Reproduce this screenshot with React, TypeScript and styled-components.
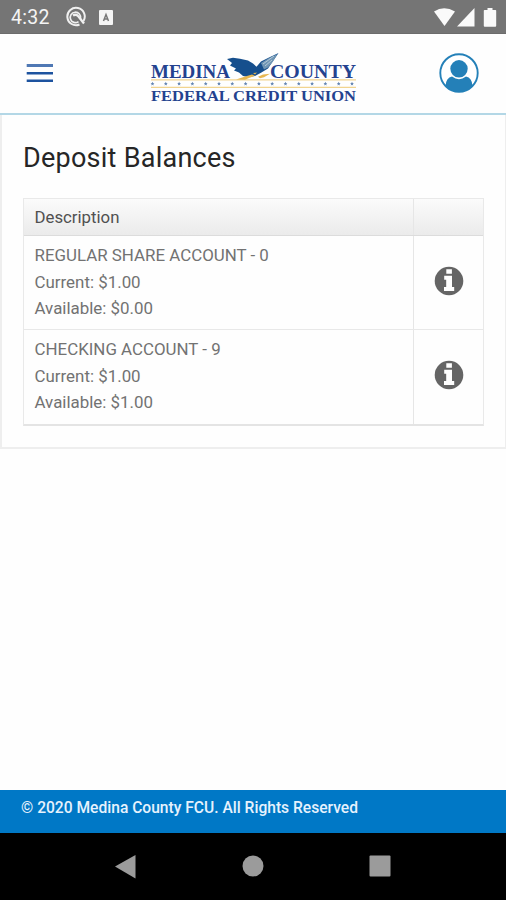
import React from "react";
import styled, { createGlobalStyle } from "styled-components";

const GlobalStyle = createGlobalStyle`
  * { box-sizing: border-box; }
  body { margin: 0; background: #fff; font-family: Roboto, sans-serif; }
  svg { display: block; flex: none; }
`;

const Screen = styled.div`
  width: 506px;
  height: 900px;
  display: flex;
  flex-direction: column;
  background: #fefefe;
`;

const StatusBar = styled.div`
  height: 34px;
  flex: none;
  display: flex;
  align-items: center;
  padding: 1px 9px 0 11px;
  background: #757575;
  border-bottom: 1px solid #6c6c6c;
  color: #f4f4f4;
`;

const Clock = styled.span`
  width: 54px;
  padding-top: 1px;
  font-size: 19.5px;
  letter-spacing: 0.3px;
  line-height: 33px;
`;

const StatusIcons = styled.div<{ $end?: boolean }>`
  display: flex;
  align-items: center;
  gap: ${(p) => (p.$end ? "0" : "12px")};
  margin-left: ${(p) => (p.$end ? "auto" : "0")};
`;

const Header = styled.header`
  height: 81px;
  flex: none;
  display: flex;
  align-items: flex-start;
  padding: 0 27px 0 26px;
  border-bottom: 2px solid #b3d7e6;
`;

const MenuButton = styled.button`
  width: 28px;
  height: 78px;
  padding: 0;
  border: 0;
  background: none;
  display: flex;
  align-items: center;
`;

const LogoBox = styled.div`
  margin: 14px 0 0 94px;
`;

const ProfileButton = styled(MenuButton)`
  width: 40px;
  margin: 0 0 0 auto;
`;

const Panel = styled.main`
  height: 334px;
  flex: none;
  padding: 26px 21px 0 21px;
  border: 1px solid #eeeeee;
  border-width: 0 1px 2px 2px;
`;

const Title = styled.h1`
  margin: 0;
  font-size: 27px;
  font-weight: 400;
  line-height: 34px;
  color: #262626;
  letter-spacing: 0.25px;
`;

const Table = styled.div`
  margin-top: 23px;
  width: 461px;
  border: 1px solid #e9e9e9;
  border-bottom: 2px solid #e4e4e4;
`;

const Row = styled.div<{ $head?: boolean }>`
  display: grid;
  grid-template-columns: 390px 1fr;
  height: ${(p) => (p.$head ? "37px" : "94px")};
  background: ${(p) => (p.$head ? "linear-gradient(#fbfbfb, #ebebeb)" : "#fefefe")};
  border-bottom: 1px solid ${(p) => (p.$head ? "#dcdcdc" : "#e8e8e8")};
  &:last-child { border-bottom: 0; }
`;

const Cell = styled.div<{ $head?: boolean }>`
  padding: ${(p) => (p.$head ? "0 0 0 10.5px" : "6px 0 0 10.5px")};
  border-right: 1px solid #e6e6e6;
  font-size: ${(p) => (p.$head ? "16.8px" : "16.9px")};
  line-height: ${(p) => (p.$head ? "36px" : "26.6px")};
  color: ${(p) => (p.$head ? "#505050" : "#727272")};
`;

const Line = styled.div``;

const ActionCell = styled.div`
  display: flex;
  align-items: flex-start;
  justify-content: center;
  padding-top: 29.5px;
`;

const Footer = styled.footer`
  height: 43px;
  flex: none;
  margin-top: auto;
  padding: 5px 21px 0;
  background: #0078c6;
  color: #e6f2fd;
  font-size: 15.6px;
  font-weight: 500;
  line-height: 26px;
`;

const NavBar = styled.nav`
  height: 67px;
  flex: none;
  display: flex;
  justify-content: space-between;
  padding: 22px 115px 0 114px;
  background: #000;
`;

const InfoIcon = () => (
  <svg width="30" height="30" viewBox="0 0 30 30">
    <circle cx="15" cy="15" r="14.3" fill="#656565" />
    <path d="M12.300 3.300h5.600v4.400h-5.600zM10.200 9.800h7.800v11.200h2.200v3.900h-10.200v-3.900h2.200v-7.200h-2z" fill="#fff" />
  </svg>
);

const stars = Array.from({ length: 16 }, (_, i) => 2.5 + i * 13.3);

const Logo = () => (
  <svg width="210" height="58" viewBox="0 0 210 58" fontFamily="'Liberation Serif', serif" fontWeight="700" fill="#24428f">
    <text x="3" y="30" fontSize="18.5" textLength="79" lengthAdjust="spacingAndGlyphs">MEDINA</text>
    <text x="122" y="30" fontSize="18.5" textLength="86" lengthAdjust="spacingAndGlyphs">COUNTY</text>
    <path d="M3 31.8h205M3 39.3h205" stroke="#f1d48f" strokeWidth="1.2" />
    {stars.map((x) => (
      <path key={x} transform={`translate(${x + 2} 35.7)`} d="M0-1.9.6-.6 1.9-.5.9.4 1.2 1.8 0 1.1-1.2 1.8-.9.4-1.9-.5-.6-.6z" fill="#6687b3" />
    ))}
    <text x="3" y="53" fontSize="15.2" textLength="205" lengthAdjust="spacingAndGlyphs">FEDERAL CREDIT UNION</text>
    <path d="M79 11 85 9.800 92 10.800 100 12.500 105 15.500 108.500 18.800 113 13.500 121 9.500 130.500 5 124 14.500 120 20.500 113 24.800 107 28 100 29 95 28 91 24.500 86 22.500 88 20.500 82 17.500 84 15z" fill="#164f8d" />
    <path d="m113 15 8-5 8.500-4-4.500 7.500-5 6-4 2z" fill="#6f95b4" />
    <path d="m115 16 11-8m-9 10 7-6" stroke="#c3d4e0" strokeWidth=".8" />
    <path d="m88 31.500 10-3.200 6-1.800 3 1.200-6 2.300-4 1.800zM110 28.700l5-2.200 7-.7-6 3.400-4 1zM105 25l4-.5-2 2z" fill="#e7b750" />
  </svg>
);

const accounts = [
  { name: "REGULAR SHARE ACCOUNT - 0", current: "$1.00", available: "$0.00" },
  { name: "CHECKING ACCOUNT - 9", current: "$1.00", available: "$1.00" },
];

export default function App() {
  return (
    <Screen>
      <GlobalStyle />
      <StatusBar>
        <Clock>4:32</Clock>
        <StatusIcons>
          <svg width="22" height="22" viewBox="0 0 22 22" fill="none" stroke="#f0f0f0">
            <path d="M14.500 18.500A8.700 8.700 0 1 1 18.500 15" strokeWidth="2" />
            <path d="M13.500 15.600A5.200 5.200 0 1 1 15.500 12.500" strokeWidth="1.700" />
            <path d="M8 9.500q3-2 5.500 1L19 17.500" strokeWidth="2.300" />
          </svg>
          <svg width="14" height="16" viewBox="0 0 14 16">
            <rect y="1" width="14" height="15" rx="1" fill="#f4f4f4" />
            <path d="M4.500 12 7 5.500l2.500 6.500M5.300 10h3.400" fill="none" stroke="#777" strokeWidth="1.500" />
          </svg>
        </StatusIcons>
        <StatusIcons $end>
          <svg width="64" height="22" viewBox="0 0 64 22" fill="#fafafa">
            <path d="M1 5.500Q11 -.8 22 5.500L11.500 20z" />
            <path d="M24 20.500 41.500 2v18.500z" />
            <path d="M51.500 4h3V2h5v2h3q.7 0 .7.700v15.100q0 .9-.9.900H51.700q-.9 0-.9-.9V4.700q0-.7.700-.7z" />
          </svg>
        </StatusIcons>
      </StatusBar>
      <Header>
        <MenuButton aria-label="Menu">
          <svg width="28" height="22" viewBox="0 0 28 22">
            <path d="M.7 3.500h26.300" stroke="#4f78b4" strokeWidth="3" />
            <path d="M.7 11.200h26.300M.7 18.700h26.300" stroke="#1d539f" strokeWidth="2.500" />
          </svg>
        </MenuButton>
        <LogoBox>
          <Logo />
        </LogoBox>
        <ProfileButton aria-label="Profile">
          <svg width="40" height="40" viewBox="0 0 40 40">
            <circle cx="20" cy="20" r="18.700" fill="#fff" stroke="#2480b8" strokeWidth="1.900" />
            <circle cx="20" cy="15.800" r="8.700" fill="#2480b8" />
            <path d="M6.500 33Q7 24.800 13 23.600Q20 28.800 27 23.600Q33 24.800 33.500 33Q27 39 20 39T6.500 33z" fill="#2480b8" />
          </svg>
        </ProfileButton>
      </Header>
      <Panel>
        <Title>Deposit Balances</Title>
        <Table>
          <Row $head>
            <Cell $head>Description</Cell>
          </Row>
          {accounts.map((a) => (
            <Row key={a.name}>
              <Cell>
                <Line>{a.name}</Line>
                <Line>Current: {a.current}</Line>
                <Line>Available: {a.available}</Line>
              </Cell>
              <ActionCell>
                <InfoIcon />
              </ActionCell>
            </Row>
          ))}
        </Table>
      </Panel>
      <Footer>© 2020 Medina County FCU. All Rights Reserved</Footer>
      <NavBar>
        <svg width="22" height="24" viewBox="0 0 22 24"><path d="M1 11.500 21.500 0v23.500z" fill="#9b9b9b" /></svg>
        <svg width="22" height="22" viewBox="0 0 22 22"><circle cx="11" cy="11" r="10.500" fill="#9b9b9b" /></svg>
        <svg width="22" height="22" viewBox="0 0 22 22"><rect x=".5" y=".5" width="21" height="21" rx="1" fill="#9b9b9b" /></svg>
      </NavBar>
    </Screen>
  );
}
